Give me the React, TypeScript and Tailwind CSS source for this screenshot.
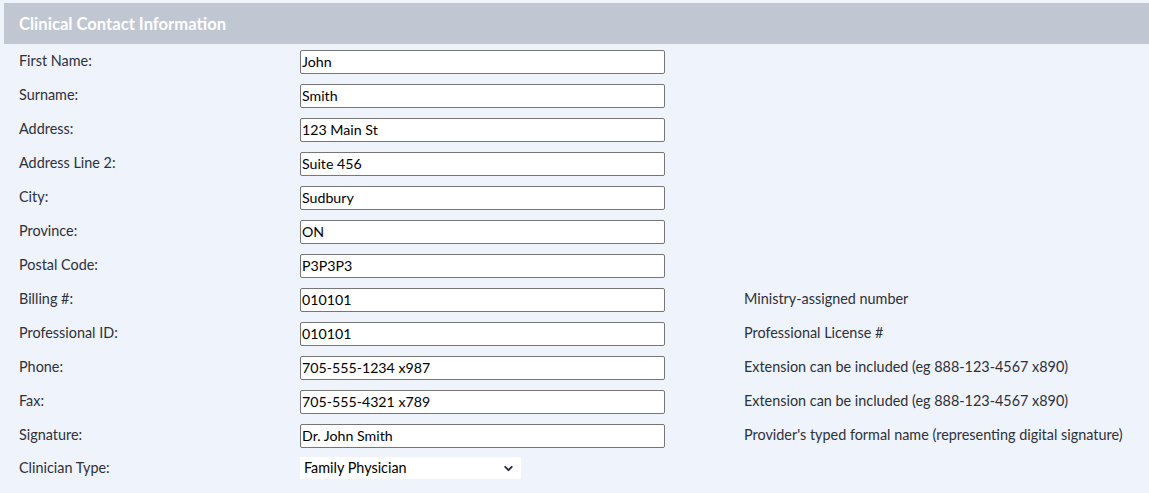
import { ChevronDown } from "lucide-react";

const rows = [
    { label: "First Name:", value: "John" },
    { label: "Surname:", value: "Smith" },
    { label: "Address:", value: "123 Main St" },
    { label: "Address Line 2:", value: "Suite 456" },
    { label: "City:", value: "Sudbury" },
    { label: "Province:", value: "ON" },
    { label: "Postal Code:", value: "P3P3P3" },
    { label: "Billing #:", value: "010101", help: "Ministry-assigned number" },
    { label: "Professional ID:", value: "010101", help: "Professional License #" },
    { label: "Phone:", value: "705-555-1234 x987", help: "Extension can be included (eg 888-123-4567 x890)" },
    { label: "Fax:", value: "705-555-4321 x789", help: "Extension can be included (eg 888-123-4567 x890)" },
    { label: "Signature:", value: "Dr. John Smith", help: "Provider's typed formal name (representing digital signature)" },
];

export default function App() {
    return (
        <div className="min-h-screen bg-[#eef3fc] pt-[3px] pl-[4px] text-[14.4px] leading-[20px] text-[#2e3138] font-['Lato',sans-serif]">
            <div className="h-[41px] bg-[#c0c7d2] px-[15px] flex items-center text-white font-bold text-[16.6px]">
                Clinical Contact Information
            </div>
            <div className="pt-[6px] pl-[15px]">
                {rows.map((row, i) => (
                    <div key={i} className="h-[34px] flex items-start">
                        <div className="w-[281px] pt-[1px]">{row.label}</div>
                        <input
                            readOnly
                            value={row.value}
                            className="w-[365px] h-[24px] bg-white border border-[#767676] rounded-[2px] px-[1px] pb-[1px] text-[14.2px] text-black outline-none font-['Lato',sans-serif]"
                        />
                        {row.help && <div className="ml-[79px] pt-[1px]">{row.help}</div>}
                    </div>
                ))}
                <div className="h-[34px] flex items-start -mt-[1px]">
                    <div className="w-[281px] pt-[1px]">Clinician Type:</div>
                    <div className="w-[221px] h-[22px] bg-white flex items-center justify-between pl-[4px] pr-[6px] text-black">
                        <span>Family Physician</span>
                        <ChevronDown className="w-[13px] h-[13px] text-[#2a2a3a]" strokeWidth={3.5} />
                    </div>
                </div>
            </div>
        </div>
    );
}
